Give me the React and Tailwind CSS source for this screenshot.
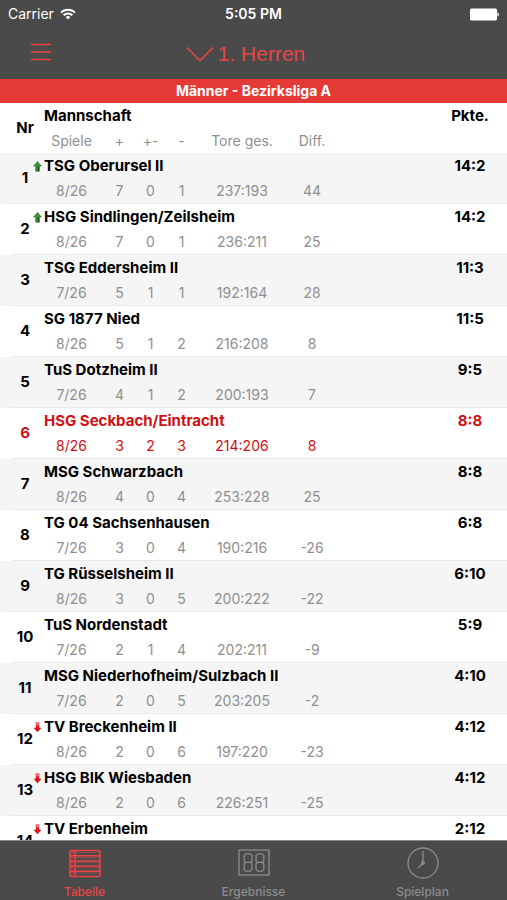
import React from "react";

const teams = [
  { nr: 1, name: "TSG Oberursel II", games: "8/26", won: 7, drawn: 0, lost: 1, goals: "237:193", diff: 44, points: "14:2", trend: "up" },
  { nr: 2, name: "HSG Sindlingen/Zeilsheim", games: "8/26", won: 7, drawn: 0, lost: 1, goals: "236:211", diff: 25, points: "14:2", trend: "up" },
  { nr: 3, name: "TSG Eddersheim II", games: "7/26", won: 5, drawn: 1, lost: 1, goals: "192:164", diff: 28, points: "11:3" },
  { nr: 4, name: "SG 1877 Nied", games: "8/26", won: 5, drawn: 1, lost: 2, goals: "216:208", diff: 8, points: "11:5" },
  { nr: 5, name: "TuS Dotzheim II", games: "7/26", won: 4, drawn: 1, lost: 2, goals: "200:193", diff: 7, points: "9:5" },
  { nr: 6, name: "HSG Seckbach/Eintracht", games: "8/26", won: 3, drawn: 2, lost: 3, goals: "214:206", diff: 8, points: "8:8", own: true },
  { nr: 7, name: "MSG Schwarzbach", games: "8/26", won: 4, drawn: 0, lost: 4, goals: "253:228", diff: 25, points: "8:8" },
  { nr: 8, name: "TG 04 Sachsenhausen", games: "7/26", won: 3, drawn: 0, lost: 4, goals: "190:216", diff: -26, points: "6:8" },
  { nr: 9, name: "TG Rüsselsheim II", games: "8/26", won: 3, drawn: 0, lost: 5, goals: "200:222", diff: -22, points: "6:10" },
  { nr: 10, name: "TuS Nordenstadt", games: "7/26", won: 2, drawn: 1, lost: 4, goals: "202:211", diff: -9, points: "5:9" },
  { nr: 11, name: "MSG Niederhofheim/Sulzbach II", games: "7/26", won: 2, drawn: 0, lost: 5, goals: "203:205", diff: -2, points: "4:10" },
  { nr: 12, name: "TV Breckenheim II", games: "8/26", won: 2, drawn: 0, lost: 6, goals: "197:220", diff: -23, points: "4:12", trend: "down" },
  { nr: 13, name: "HSG BIK Wiesbaden", games: "8/26", won: 2, drawn: 0, lost: 6, goals: "226:251", diff: -25, points: "4:12", trend: "down" },
  { nr: 14, name: "TV Erbenheim", games: "", won: "", drawn: "", lost: "", goals: "", diff: "", points: "2:12", trend: "down" },
];

const StatusBar = () => (
  <div className="grid h-7 grid-cols-3 items-center px-2 text-sm text-white">
    <div className="flex items-center gap-1.5">
      <span>Carrier</span>
      <svg viewBox="0 0 16 12" className="h-3 w-4" fill="none" stroke="currentColor" strokeWidth="2">
        <path d="M1 4.6a10 10 0 0 1 14 0" />
        <path d="M3.6 7.3a6.2 6.2 0 0 1 8.8 0" />
        <path d="M8 11.6 5.6 9.2a3.4 3.4 0 0 1 4.8 0Z" fill="currentColor" stroke="none" />
      </svg>
    </div>
    <span className="text-center font-semibold">5:05 PM</span>
    <svg viewBox="0 0 31 13" className="h-[13px] w-[31px] justify-self-end" fill="currentColor">
      <rect x="2" y="0.5" width="27" height="12" rx="1.5" />
      <path d="M29.4 4.5c2 .6 2 3.4 0 4Z" />
    </svg>
  </div>
);

const TrendArrow = ({ trend }) =>
  trend === "up" ? (
    <svg viewBox="0 0 9 11" role="img" aria-label="Aufsteiger" className="absolute top-2 -left-1.5 h-[11px] w-[9px]">
      <path d="M4.5.5 8.5 5H6.4v5.3H2.6V5H.5Z" fill="#3d9a35" stroke="#2a6b27" strokeWidth=".6" />
      <path d="M4.5 5h1.6v5H4.5Z" fill="#24552a" />
    </svg>
  ) : (
    <svg viewBox="0 0 9 11" role="img" aria-label="Absteiger" className="absolute top-2 -left-1.5 h-[11px] w-[9px]">
      <path d="M4.5 10.3.5 5.8h2.3V.5h3.4v5.3h2.3Z" fill="#e0141e" />
      <path d="M2.8.5h3.4v3H2.8Z" fill="#f0707a" />
    </svg>
  );

const TeamRows = ({ team }) => {
  const nameColor = team.own ? "text-[#cf1013]" : "text-black";
  const statColor = team.own ? "text-[#cf1013]" : "text-[#8f8f8f]";
  const stripe = team.nr % 2 ? "bg-[#f5f5f5]" : "bg-white";

  return (
    <tbody className={`${stripe} ${statColor}`}>
      <tr className={`h-[26px] text-[15px] font-bold ${nameColor}`}>
        <td rowSpan={2} />
        <th scope="row" rowSpan={2} className="border-b border-[#e9e9e9] text-center">
          {team.nr}
        </th>
        <td colSpan={7} className="relative pl-[5px]">
          {team.trend && <TrendArrow trend={team.trend} />}
          {team.name}
        </td>
        <td className="text-center">{team.points}</td>
      </tr>
      <tr className="h-[25px] text-center text-sm *:border-b *:border-[#e9e9e9]">
        <td>{team.games}</td>
        <td>{team.won}</td>
        <td>{team.drawn}</td>
        <td>{team.lost}</td>
        <td>{team.goals}</td>
        <td>{team.diff}</td>
        <td colSpan={2} />
      </tr>
    </tbody>
  );
};

const Standings = () => (
  <table className="w-full table-fixed border-separate border-spacing-0 leading-5">
    <colgroup>
      <col className="w-[11px]" />
      <col className="w-7" />
      <col className="w-[65px]" />
      <col className="w-[31px]" />
      <col className="w-[31px]" />
      <col className="w-[31px]" />
      <col className="w-[90px]" />
      <col className="w-[50px]" />
      <col />
      <col className="w-[74px]" />
    </colgroup>
    <thead>
      <tr className="h-[26px] text-[15px] font-bold text-black">
        <td rowSpan={2} />
        <th rowSpan={2}>Nr</th>
        <th colSpan={7} className="pl-[5px] text-left">
          Mannschaft
        </th>
        <th>Pkte.</th>
      </tr>
      <tr className="h-6 text-sm text-[#8f8f8f] *:font-normal">
        <th>Spiele</th>
        <th>+</th>
        <th>+-</th>
        <th>-</th>
        <th>Tore ges.</th>
        <th>Diff.</th>
        <td colSpan={2} />
      </tr>
    </thead>
    {teams.map((team) => (
      <TeamRows key={team.nr} team={team} />
    ))}
  </table>
);

const TableIcon = () => (
  <svg viewBox="0 0 32 30" className="h-[30px] w-8" fill="none" stroke="currentColor" strokeWidth="1.5">
    <rect x="1" y="2.5" width="30" height="26" rx="1" />
    <path d="M1 7.7h30M1 12.9h30M1 18.1h30M1 23.3h30M6 2.5v26" />
    <path d="M1 4.4h30M1 9.4h30M1 14.6h30M1 19.8h30M1 25h30M3 2.5v26" strokeWidth=".5" />
  </svg>
);

const ScoreIcon = () => (
  <svg viewBox="0 0 32 30" className="h-[30px] w-8" fill="none" stroke="currentColor" strokeWidth="1.3">
    <rect x="1" y="2" width="30" height="25" />
    <path d="M7.8 5.8h4.6l1.6 1.6v5.6l-1.4 1.4 1.4 1.4v5.8l-1.6 1.6H7.8l-1.6-1.6v-5.8l1.4-1.4L6.2 13V7.4ZM7.6 14.4h5" />
    <path d="M19.6 5.8h4.6l1.6 1.6v5.6l-1.4 1.4 1.4 1.4v5.8l-1.6 1.6h-4.6L18 21.6v-5.8l1.4-1.4L18 13V7.4ZM19.4 14.4h5" />
  </svg>
);

const ClockIcon = () => (
  <svg viewBox="0 0 32 32" className="h-8 w-8" fill="none" stroke="currentColor" strokeWidth="1.3">
    <circle cx="16" cy="16" r="15" />
    <path d="M16 4v12l-5 5.4" />
    <circle cx="16" cy="16" r="1.3" fill="currentColor" />
  </svg>
);

const tabs = [
  { label: "Tabelle", Icon: TableIcon, active: true },
  { label: "Ergebnisse", Icon: ScoreIcon },
  { label: "Spielplan", Icon: ClockIcon },
];

const App = () => {
  return (
    <div className="flex h-screen flex-col bg-white font-[Inter,sans-serif]">
      <header className="bg-[#4a4a4a]">
        <StatusBar />
        <div className="grid h-[51px] grid-cols-[1fr_auto_1fr] items-center pr-[46px] pl-[30px] text-[#e84545]">
          <button type="button" aria-label="Menü" className="justify-self-start">
            <svg viewBox="0 0 22 18" className="-mt-1 h-[18px] w-[22px]" stroke="currentColor" strokeWidth="1.4">
              <path d="M1 1.5h20M1 9h20M1 16.5h20" />
            </svg>
          </button>
          <button type="button" className="flex items-center gap-1 font-['Liberation_Sans',sans-serif] text-[21px]">
            <svg viewBox="0 0 28 16" className="h-4 w-7" fill="none" stroke="currentColor" strokeWidth="1.6">
              <path d="M1 1.5 14 14.5 27 1.5" />
            </svg>
            1. Herren
          </button>
        </div>
      </header>

      <h1 className="bg-[#e53935] text-center text-sm leading-6 font-bold text-white">
        Männer - Bezirksliga A
      </h1>

      <main className="min-h-0 flex-1 overflow-y-auto [scrollbar-width:none]">
        <Standings />
      </main>

      <nav className="grid h-[60px] grid-cols-3 border-t border-[#8a8a8a] bg-[#4a4a4a]">
        {tabs.map(({ label, Icon, active }) => (
          <button
            key={label}
            type="button"
            className={`flex flex-col items-center justify-between pt-1.5 text-xs font-medium ${active ? "text-[#e84545]" : "text-[#8c8c8c]"}`}
          >
            <span className="flex h-8 items-center">
              <Icon />
            </span>
            {label}
          </button>
        ))}
      </nav>
    </div>
  );
};

export default App;
